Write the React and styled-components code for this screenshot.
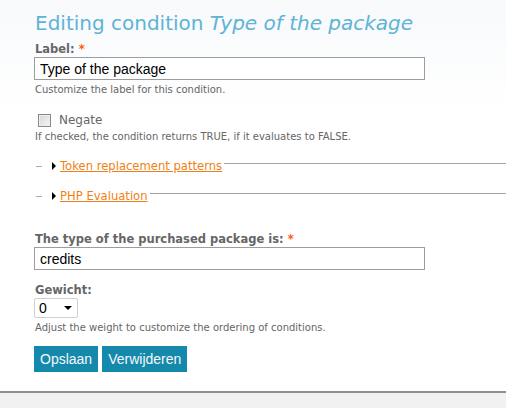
import styled, { createGlobalStyle } from "styled-components";

const GlobalStyle = createGlobalStyle`
  html, body {
    margin: 0;
    padding: 0;
    background: #f1f1f1;
  }
  body {
    font-family: "DejaVu Sans", Verdana, sans-serif;
    color: #666;
  }
`;

const Page = styled.div`
  width: 506px;
  height: 408px;
  overflow: hidden;
  display: flex;
  flex-direction: column;
`;

const Content = styled.div`
  height: 393px;
  background: linear-gradient(to bottom, #f7f9fb 0px, #ffffff 110px);
  border-bottom: 2px solid #8f8f8f;
  padding: 9px 0 0 34px;
  box-sizing: border-box;
`;

const Title = styled.h1`
  margin: 0 0 6px 1px;
  font-size: 20px;
  font-weight: normal;
  color: #5db4d6;
  line-height: 28px;
  em {
    font-style: italic;
  }
`;

const Item = styled.div`
  margin-bottom: ${(p) => p.$gap || 0}px;
`;

const Label = styled.label`
  display: block;
  font-size: 11.5px;
  font-weight: bold;
  color: #666;
  line-height: 13px;
  margin: 0 0 1px 1px;
`;

const Required = styled.span`
  color: #ff5a0d;
  font-weight: bold;
`;

const TextInput = styled.input`
  display: block;
  width: 391px;
  height: 23px;
  box-sizing: border-box;
  border: 1px solid #9d9d9d;
  padding: 1px 5px 0;
  margin: 0;
  font-family: "Liberation Sans", Arial, sans-serif;
  font-size: 14px;
  color: #000;
  background: #fff;
  outline: none;
`;

const Description = styled.div`
  font-size: 10px;
  line-height: 12px;
  color: #666;
  margin: 4px 0 0 1px;
`;

const CheckRow = styled.label`
  display: flex;
  align-items: center;
  gap: 8px;
  margin-left: 4px;
  font-size: 12px;
  color: #666;
`;

const Box = styled.span`
  width: 11px;
  height: 11px;
  border: 1px solid #8a8a8a;
  background: linear-gradient(135deg, #d6d6d6, #f6f6f6);
  box-shadow: inset 0 0 0 1px #eee;
`;

const Collapsed = styled.div`
  display: flex;
  align-items: center;
  margin-left: 2px;
  height: 14px;
`;

const Dash = styled.span`
  width: 6px;
  height: 1px;
  background: #aaa;
  margin-right: 10px;
`;

const Arrow = styled.span`
  width: 0;
  height: 0;
  border-top: 4px solid transparent;
  border-bottom: 4px solid transparent;
  border-left: 4px solid #000;
  margin-right: 4px;
`;

const Link = styled.a`
  font-size: 11.6px;
  color: #f07f16;
  text-decoration: underline;
  white-space: nowrap;
  cursor: pointer;
`;

const Rule = styled.span`
  flex: 1;
  height: 1px;
  background: #a5a5a5;
  margin-left: 2px;
  align-self: center;
  transform: translateY(-3px);
`;

const Select = styled.div`
  width: 44px;
  height: 20px;
  box-sizing: border-box;
  border: 1px solid #cfcfcf;
  border-radius: 2px;
  display: flex;
  align-items: center;
  justify-content: space-between;
  padding: 0 5px 0 4px;
  font-family: "Liberation Sans", Arial, sans-serif;
  font-size: 14px;
  color: #000;
  background: #fff;
`;

const Caret = styled.span`
  width: 0;
  height: 0;
  border-left: 4px solid transparent;
  border-right: 4px solid transparent;
  border-top: 4px solid #000;
`;

const Actions = styled.div`
  display: flex;
  gap: 4px;
`;

const Button = styled.button`
  height: 26px;
  padding: 0 6px;
  border: none;
  background: #1589ab;
  color: #f4f8fa;
  font-family: "Liberation Sans", Arial, sans-serif;
  font-size: 14px;
  cursor: pointer;
`;

export default function App() {
  return (
    <>
      <GlobalStyle />
      <Page>
        <Content>
          <Title>
            Editing condition <em>Type of the package</em>
          </Title>

          <Item $gap={17}>
            <Label>
              Label: <Required>*</Required>
            </Label>
            <TextInput defaultValue="Type of the package" />
            <Description>Customize the label for this condition.</Description>
          </Item>

          <Item $gap={16}>
            <CheckRow>
              <Box />
              Negate
            </CheckRow>
            <Description>
              If checked, the condition returns TRUE, if it evaluates to FALSE.
            </Description>
          </Item>

          <Item $gap={16}>
            <Collapsed>
              <Dash />
              <Arrow />
              <Link>Token replacement patterns</Link>
              <Rule />
            </Collapsed>
          </Item>

          <Item $gap={30}>
            <Collapsed>
              <Dash />
              <Arrow />
              <Link>PHP Evaluation</Link>
              <Rule />
            </Collapsed>
          </Item>

          <Item $gap={14}>
            <Label>
              The type of the purchased package is: <Required>*</Required>
            </Label>
            <TextInput defaultValue="credits" />
          </Item>

          <Item $gap={12}>
            <Label>Gewicht:</Label>
            <Select>
              0<Caret />
            </Select>
            <Description>
              Adjust the weight to customize the ordering of conditions.
            </Description>
          </Item>

          <Actions>
            <Button>Opslaan</Button>
            <Button>Verwijderen</Button>
          </Actions>
        </Content>
      </Page>
    </>
  );
}
